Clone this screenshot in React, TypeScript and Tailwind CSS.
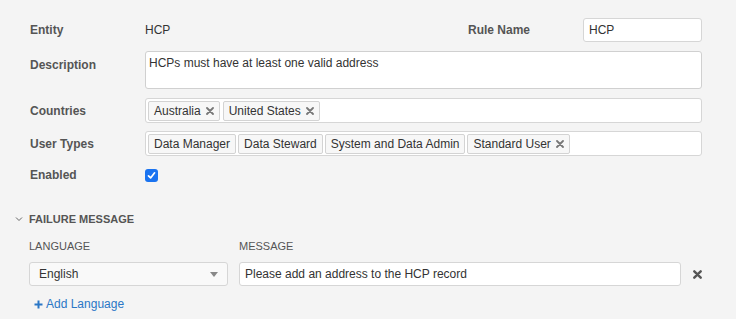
import React from "react";

const font = { fontFamily: '"Liberation Sans", Arial, sans-serif' };

function Tag({ label, removable = false }: { label: string; removable?: boolean }) {
  return (
    <span className="flex h-[20px] items-center gap-[5px] rounded-[2px] border border-[#d3d3d3] bg-[#f7f7f7] px-[5px] text-[12px] text-[#333]">
      {label}
      {removable && (
        <svg width="8" height="8" viewBox="0 0 8 8" className="mt-[1px]">
          <path d="M1 1L7 7M7 1L1 7" stroke="#777" strokeWidth="1.8" strokeLinecap="round" />
        </svg>
      )}
    </span>
  );
}

function Row({ label, children, className = "", labelClass = "" }: { label: string; children: React.ReactNode; className?: string; labelClass?: string }) {
  return (
    <div className={`flex ${className}`}>
      <div className={`w-[115px] shrink-0 text-[12px] font-bold text-[#555] ${labelClass}`}>{label}</div>
      <div className="flex-1">{children}</div>
    </div>
  );
}

export default function App() {
  return (
    <div style={font} className="h-[319px] w-[736px] overflow-hidden bg-[#f4f4f4]">
      <div className="pl-[30px] pr-[34px] pt-[18px]">
        <div className="flex h-[24px] items-center">
          <div className="w-[115px] text-[12px] font-bold text-[#555]">Entity</div>
          <div className="flex-1 text-[12px] text-[#333]">HCP</div>
          <div className="w-[115px] text-[12px] font-bold text-[#555]">Rule Name</div>
          <div className="flex h-[24px] w-[119px] items-center rounded-[3px] border border-[#d6d6d6] bg-white px-[5px] text-[12px] text-[#333]">
            HCP
          </div>
        </div>

        <Row label="Description" className="mt-[9px] items-start" labelClass="pt-[5px]">
          <div className="h-[38px] rounded-[3px] border border-[#d0d0d0] bg-white px-[3px] pt-[2px] text-[12px] text-[#333]">
            HCPs must have at least one valid address
          </div>
        </Row>

        <Row label="Countries" className="mt-[9px] items-center">
          <div className="flex h-[25px] items-center gap-[3px] rounded-[3px] border border-[#d6d6d6] bg-white px-[2px]">
            <Tag label="Australia" removable />
            <Tag label="United States" removable />
          </div>
        </Row>

        <Row label="User Types" className="mt-[8px] items-center">
          <div className="flex h-[25px] items-center gap-[2px] rounded-[3px] border border-[#d6d6d6] bg-white px-[2px]">
            <Tag label="Data Manager" />
            <Tag label="Data Steward" />
            <Tag label="System and Data Admin" />
            <Tag label="Standard User" removable />
          </div>
        </Row>

        <Row label="Enabled" className="mt-[11px] h-[16px] items-center">
          <div className="flex h-[13px] w-[13px] items-center justify-center rounded-[3px] bg-[#1a73f0]">
            <svg width="9" height="9" viewBox="0 0 9 9">
              <path d="M1.5 4.8L3.6 6.9L7.6 1.8" fill="none" stroke="white" strokeWidth="1.7" strokeLinecap="round" strokeLinejoin="round" />
            </svg>
          </div>
        </Row>
      </div>

      <div className="mt-[28px] flex items-center pl-[15px]">
        <svg width="8" height="6" viewBox="0 0 8 6" className="mr-[6px]">
          <path d="M1 1.5L4 4.5L7 1.5" fill="none" stroke="#666" strokeWidth="1" />
        </svg>
        <span className="text-[11px] font-bold text-[#555]">FAILURE MESSAGE</span>
      </div>

      <div className="pl-[29px] pr-[34px]">
        <div className="mt-[10px] flex text-[11px] text-[#555]">
          <div className="w-[210px]">LANGUAGE</div>
          <div>MESSAGE</div>
        </div>

        <div className="mt-[8px] flex items-center">
          <div className="flex h-[24px] w-[199px] items-center justify-between rounded-[3px] border border-[#d6d6d6] bg-[#f9f9f9] pl-[9px] pr-[9px] text-[12px] text-[#333]">
            English
            <svg width="8" height="5" viewBox="0 0 8 5">
              <path d="M0 0H8L4 5Z" fill="#888" />
            </svg>
          </div>
          <div className="ml-[11px] flex h-[24px] w-[442px] items-center rounded-[3px] border border-[#d6d6d6] bg-white px-[5px] text-[12px] text-[#333]">
            Please add an address to the HCP record
          </div>
          <svg width="9" height="9" viewBox="0 0 9 9" className="ml-[12px]">
            <path d="M1.3 1.3L7.7 7.7M7.7 1.3L1.3 7.7" stroke="#555" strokeWidth="2.4" strokeLinecap="round" />
          </svg>
        </div>

        <div className="mt-[9px] flex items-center pl-[5px] text-[12px] text-[#2a77c6]">
          <svg width="9" height="9" viewBox="0 0 9 9" className="mr-[3px]">
            <path d="M4.5 0.5V8.5M0.5 4.5H8.5" stroke="#2a77c6" strokeWidth="2" />
          </svg>
          Add Language
        </div>
      </div>
    </div>
  );
}
